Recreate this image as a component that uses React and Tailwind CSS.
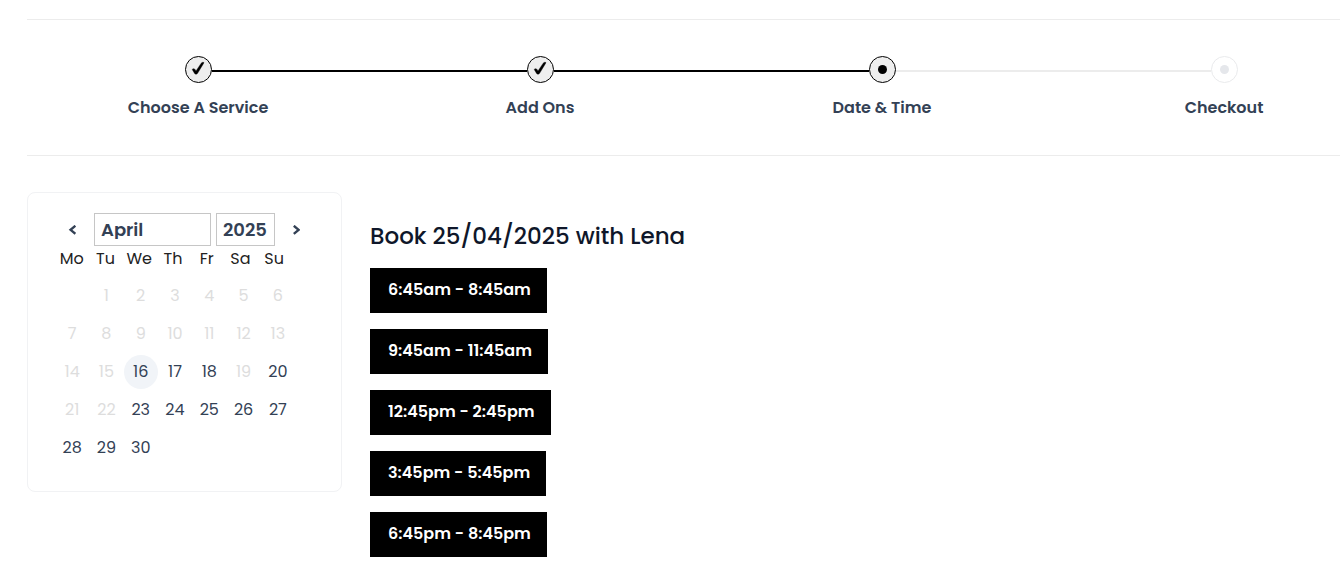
import React, { useState } from "react";

const steps = [
  { label: "Choose A Service", state: "done" },
  { label: "Add Ons", state: "done" },
  { label: "Date & Time", state: "current" },
  { label: "Checkout", state: "upcoming" },
];

const weekdays = ["Mo", "Tu", "We", "Th", "Fr", "Sa", "Su"];

const months = [
  "January",
  "February",
  "March",
  "April",
  "May",
  "June",
  "July",
  "August",
  "September",
  "October",
  "November",
  "December",
];

const days = Array.from({ length: 30 }, (_, i) => i + 1);
const unavailable = [1, 2, 3, 4, 5, 6, 7, 8, 9, 10, 11, 12, 13, 14, 15, 19, 21, 22];
const today = 16;

const slots = [
  "6:45am - 8:45am",
  "9:45am - 11:45am",
  "12:45pm - 2:45pm",
  "3:45pm - 5:45pm",
  "6:45pm - 8:45pm",
];

const StepIcon = ({ state }) => {
  if (state === "done") {
    return (
      <svg viewBox="0 0 27 27" className="block h-[27px] w-[27px]">
        <circle cx="13.5" cy="13.5" r="13" fill="#eeeeee" stroke="#000" />
        <path
          d="M7.2 13.4 C7.9 12.4 9.5 12.4 10 13.4 L11 15 L16.2 7.2 C16.9 6.2 18.4 6.1 19 6.7 L12.6 17.3 C11.9 18.5 10.3 18.5 9.6 17.5 Z"
          fill="#000"
          stroke="#000"
          strokeWidth="0.4"
          strokeLinejoin="round"
        />
      </svg>
    );
  }
  const current = state === "current";
  return (
    <svg viewBox="0 0 27 27" className="block h-[27px] w-[27px]">
      <circle
        cx="13.5"
        cy="13.5"
        r="13"
        fill={current ? "#eeeeee" : "#fff"}
        stroke={current ? "#000" : "#e9eaec"}
      />
      <circle cx="13.5" cy="13.5" r="4.5" fill={current ? "#000" : "#e5e7eb"} />
    </svg>
  );
};

const Stepper = () => (
  <ol className="-mr-[55px] grid grid-cols-4 border-y border-[#ececec] pt-9 pb-[35px]">
    {steps.map((step, i) => (
      <li key={step.label} className="flex flex-col items-center">
        <div className="flex w-full items-center">
          <span
            className={
              i === 0
                ? "mt-[3px] h-0.5 flex-1"
                : step.state === "upcoming"
                ? "mt-[3px] h-0.5 flex-1 bg-[#ececec]"
                : "mt-[3px] h-0.5 flex-1 bg-black"
            }
          ></span>
          <StepIcon state={step.state} />
          <span
            className={
              i === steps.length - 1
                ? "mt-[3px] h-0.5 flex-1"
                : step.state === "done"
                ? "mt-[3px] h-0.5 flex-1 bg-black"
                : "mt-[3px] h-0.5 flex-1 bg-[#ececec]"
            }
          ></span>
        </div>
        <span className="mt-[13px] text-base font-semibold text-[#334155]">{step.label}</span>
      </li>
    ))}
  </ol>
);

const Calendar = ({ selected, onSelect }) => {
  const [month, setMonth] = useState("April");
  const [year, setYear] = useState("2025");

  return (
    <section className="w-[315px] shrink-0 rounded-lg border border-[#f1f2f4] px-[27px] pt-5 pb-[26px]">
      <div className="flex h-[33px] items-center">
        <button aria-label="Previous month" className="flex h-8 w-[34px] items-center justify-center">
          <svg viewBox="0 0 8 10" className="h-2.5 w-2" fill="none" stroke="#334155" strokeWidth="2.4">
            <path d="M7.4 0.8 L2.6 4.8 L7.4 8.8" />
          </svg>
        </button>
        <select
          aria-label="Month"
          value={month}
          onChange={(e) => setMonth(e.target.value)}
          className="ml-[5px] h-[33px] w-[117px] appearance-none border border-[#c6c6c6] bg-white px-1.5 text-lg leading-none font-semibold text-[#334155]"
        >
          {months.map((m) => (
            <option key={m}>{m}</option>
          ))}
        </select>
        <select
          aria-label="Year"
          value={year}
          onChange={(e) => setYear(e.target.value)}
          className="ml-[5px] h-[33px] w-[59px] appearance-none border border-[#c6c6c6] bg-white px-1.5 text-lg leading-none font-semibold text-[#334155]"
        >
          <option>2025</option>
          <option>2026</option>
        </select>
        <button aria-label="Next month" className="ml-1 flex h-8 w-[34px] items-center justify-center">
          <svg viewBox="0 0 8 10" className="h-2.5 w-2" fill="none" stroke="#334155" strokeWidth="2.4">
            <path d="M1.8 0.8 L6.6 4.8 L1.8 8.8" />
          </svg>
        </button>
      </div>

      <div className="grid w-[236px] grid-cols-7 text-center text-base leading-[26px] text-[#222222]">
        {weekdays.map((d) => (
          <span key={d}>{d}</span>
        ))}
      </div>

      <div className="mt-[7px] grid w-60 grid-cols-7 gap-y-1">
        {days.map((day) => (
          <button
            key={day}
            disabled={unavailable.includes(day)}
            aria-pressed={selected === day}
            onClick={() => onSelect(day)}
            className={
              "h-[34px] rounded-full text-base text-[#334155] disabled:text-[#dddddd]" +
              (day === 1 ? " col-start-2" : "") +
              (day === today ? " bg-[#f1f4f8]" : "")
            }
          >
            {day}
          </button>
        ))}
      </div>
    </section>
  );
};

const App = () => {
  const [selected, setSelected] = useState(25);

  return (
    <main className="overflow-x-hidden bg-white pt-[19px] pb-6 pl-[27px] font-[Poppins,Inter,sans-serif]">
      <Stepper />

      <div className="mt-9 flex items-start gap-7">
        <Calendar selected={selected} onSelect={setSelected} />

        <section className="pt-7">
          <h1 className="text-[23px] leading-8 font-medium text-[#0f172a]">
            Book {String(selected).padStart(2, "0")}/04/2025 with Lena
          </h1>
          <div className="mt-4 flex flex-col items-start gap-4">
            {slots.map((slot) => (
              <button key={slot} className="h-[45px] bg-black pr-4 pb-0.5 pl-[18px] text-base font-semibold text-white">
                {slot}
              </button>
            ))}
          </div>
        </section>
      </div>
    </main>
  );
};

export default App;
